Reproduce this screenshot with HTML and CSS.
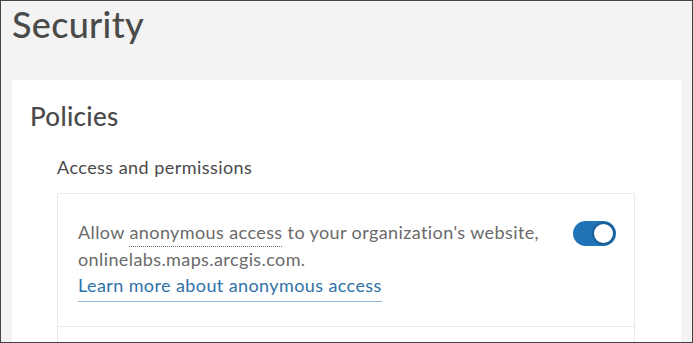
FILE: index.html
```html
<!DOCTYPE html>
<html>
<head>
<meta charset="utf-8">
<link rel="stylesheet" href="styles.css">
</head>
<body>
<div class="frame">
  <h1 class="page-title">Security</h1>
  <section class="card">
    <h2 class="card-title">Policies</h2>
    <div class="group">
      <h3 class="group-title">Access and permissions</h3>
      <div class="setting-box">
        <div class="setting-row">
          <div class="setting-text">
            <p class="setting-desc">Allow <span class="term">anonymous access</span> to your organization's website, onlinelabs.maps.arcgis.com.</p>
            <a class="setting-link" href="#">Learn more about anonymous access</a>
          </div>
          <span class="toggle"><span class="knob"></span></span>
        </div>
        <div class="setting-row next"></div>
      </div>
    </div>
  </section>
</div>
</body>
</html>
```
FILE: styles.css
```css
html, body {
  margin: 0;
  padding: 0;
}
body {
  font-family: "Lato", "Open Sans", sans-serif;
  background: #ffffff;
}
.frame {
  box-sizing: border-box;
  width: 693px;
  height: 343px;
  border: 1px solid #444444;
  background: #f3f3f3;
  overflow: hidden;
  padding: 0 11px;
}
.page-title {
  margin: 0;
  padding: 0;
  height: 79px;
  font-size: 36px;
  font-weight: 500;
  letter-spacing: 0.3px;
  line-height: 46px;
  color: #4a4a4a;
}
.card {
  background: #ffffff;
  padding: 17px 46px 0 18px;
  height: 400px;
}
.card-title {
  margin: 0;
  font-size: 26px;
  font-weight: 500;
  letter-spacing: 0.3px;
  line-height: 38px;
  color: #4a4a4a;
}
.group {
  padding-left: 27px;
}
.group-title {
  margin: 19px 0 0;
  font-size: 18px;
  font-weight: 400;
  letter-spacing: 0.45px;
  line-height: 26px;
  color: #4a4a4a;
}
.setting-box {
  margin-top: 13px;
  border: 1px solid #eaeaea;
}
.setting-row {
  display: flex;
  align-items: flex-start;
  justify-content: space-between;
  padding: 25px 18px 24px 20px;
  border-bottom: 1px solid #eaeaea;
}
.setting-row.next {
  height: 40px;
  border-bottom: none;
}
.setting-desc {
  margin: 0;
  font-size: 18px;
  letter-spacing: 0.4px;
  line-height: 26.5px;
  color: #6a6a6a;
  width: 470px;
}
.term {
  text-decoration: underline dotted #6a6a6a;
  text-decoration-thickness: 1px;
  text-underline-offset: 7px;
}
.setting-link {
  display: inline-block;
  font-size: 18px;
  letter-spacing: 0.4px;
  line-height: 26px;
  padding-bottom: 3px;
  color: #2f72a8;
  text-decoration: none;
  border-bottom: 1px solid #8fb6d6;
}
.toggle {
  position: relative;
  flex: none;
  margin-top: 2px;
  width: 43px;
  height: 25px;
  border-radius: 13px;
  background: #1f73b6;
  box-sizing: border-box;
}
.knob {
  position: absolute;
  top: 1px;
  right: 1px;
  width: 23px;
  height: 23px;
  box-sizing: border-box;
  border-radius: 50%;
  border: 2px solid #1a5e96;
  background: #ffffff;
}
```
